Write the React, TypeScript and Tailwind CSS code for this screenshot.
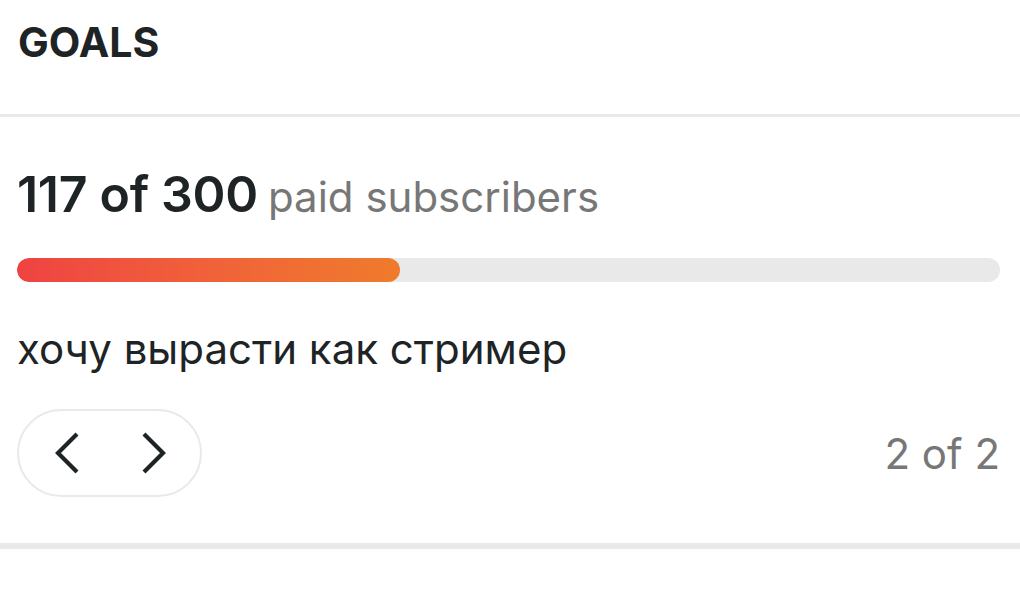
const GOAL = {
  current: 117,
  target: 300,
  label: "paid subscribers",
  title: "хочу вырасти как стример",
  index: 2,
  total: 2,
};

function Chevron({ dir }: { dir: "left" | "right" }) {
  return (
    <svg width="26" height="44" viewBox="0 0 26 44" fill="none">
      <path
        d={dir === "left" ? "M23 3 L4 22 L23 41" : "M3 3 L22 22 L3 41"}
        stroke="#1e2426"
        strokeWidth="4.2"
        strokeLinejoin="miter"
      />
    </svg>
  );
}

export default function App() {
  const pct = (GOAL.current / GOAL.target) * 100;
  return (
    <div className="w-[1020px] h-[601px] bg-white font-['Inter',sans-serif] text-[#1e2426] overflow-hidden">
      {/* Header */}
      <div className="h-[114px] px-[18px] pt-[17px]">
        <h2 className="text-[41px] leading-[50px] font-bold">GOALS</h2>
      </div>
      <div className="h-[3px] bg-[#e9e9e9]" />

      {/* Goal card */}
      <div className="pl-[17px] pr-[20px]">
        <div className="mt-[47px] flex items-baseline gap-[10px] whitespace-nowrap">
          <span className="text-[50px] leading-[60px] font-semibold tracking-[-0.3px]">
            {GOAL.current} of {GOAL.target}
          </span>
          <span className="text-[42px] leading-[60px] text-[#777777]">{GOAL.label}</span>
        </div>

        <div className="mt-[31px] h-[24px] rounded-full bg-[#e9e9e9] overflow-hidden">
          <div
            className="h-full rounded-full bg-gradient-to-r from-[#ef4242] to-[#f07b2b]"
            style={{ width: `${pct}%` }}
          />
        </div>

        <p className="mt-[41px] text-[42px] leading-[52px] whitespace-nowrap">{GOAL.title}</p>

        <div className="mt-[34px] flex items-center justify-between">
          <div className="flex h-[88px] w-[185px] items-center rounded-full border-2 border-[#e9e9e9]">
            <button className="flex h-full flex-1 items-center justify-center pl-[4px]">
              <Chevron dir="left" />
            </button>
            <button className="flex h-full flex-1 items-center justify-center pr-[2px]">
              <Chevron dir="right" />
            </button>
          </div>
          <span className="text-[42px] text-[#777777]">
            {GOAL.index} of {GOAL.total}
          </span>
        </div>
      </div>

      <div className="mt-[46px] h-[6px] bg-[#e9e9e9]" />
    </div>
  );
}
